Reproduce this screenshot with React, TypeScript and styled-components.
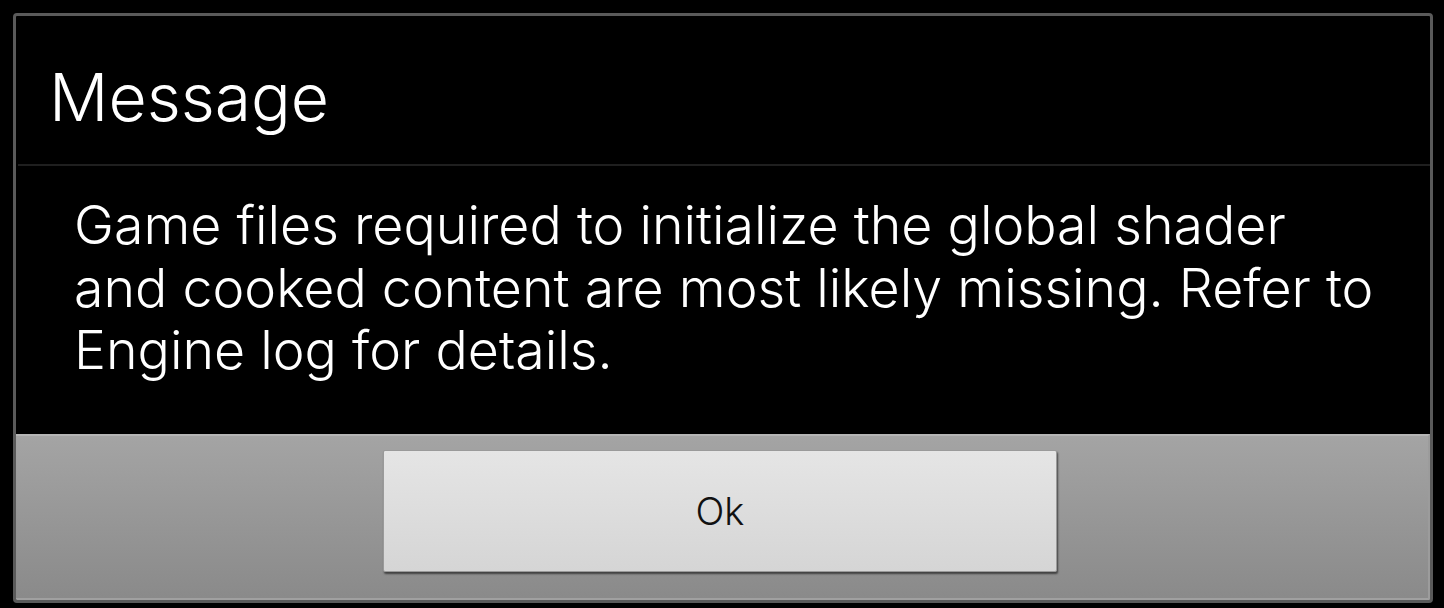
import React from "react";
import styled, { createGlobalStyle } from "styled-components";

const Global = createGlobalStyle`
  html, body { margin: 0; padding: 0; background: #000; }
  body { font-family: Inter, "Noto Sans", sans-serif; }
`;

const Frame = styled.div`
  box-sizing: border-box;
  margin: 13px 0 0 13px;
  width: 1420px;
  height: 590px;
  border: 3px solid #5a5a5a;
  border-radius: 4px;
  background: #000;
  display: flex;
  flex-direction: column;
  overflow: hidden;
`;

const Header = styled.div`
  box-sizing: border-box;
  height: 150px;
  padding: 47px 0 0 31px;
  border-bottom: 2px solid #1f1f1f;
  margin-left: 2px;
`;

const Title = styled.h1`
  margin: 0;
  font-family: Inter, "Noto Sans", sans-serif;
  font-weight: 300;
  font-size: 66px;
  line-height: 68px;
  color: #fff;
`;

const Content = styled.div`
  box-sizing: border-box;
  height: 268px;
  padding: 28px 40px 0 58px;
`;

const MessageText = styled.p`
  margin: 0;
  font-family: Inter, "Noto Sans", sans-serif;
  font-weight: 300;
  font-size: 53.7px;
  line-height: 62.5px;
  color: #fff;
`;

const Footer = styled.div`
  box-sizing: border-box;
  flex: 1;
  border-top: 2px solid #b5b5b5;
  border-bottom: 2px solid #a0a0a0;
  border-right: 2px solid #9c9c9c;
  background: linear-gradient(#a4a4a4, #8a8a8a);
  display: flex;
  justify-content: center;
  padding-top: 14px;
`;

const Button = styled.button`
  box-sizing: border-box;
  width: 674px;
  height: 122px;
  margin-left: -4px;
  border: 1px solid #9a9a9a;
  border-radius: 2px;
  background: linear-gradient(#e5e5e5, #d5d5d5);
  box-shadow: 1px 2px 2px rgba(0, 0, 0, 0.55);
  font-family: Inter, "Noto Sans", sans-serif;
  font-weight: 300;
  font-size: 38px;
  color: #111;
  padding: 0;
  cursor: pointer;
`;

export default function App() {
  return (
    <>
      <Global />
      <Frame>
        <Header>
          <Title>Message</Title>
        </Header>
        <Content>
          <MessageText>
            Game files required to initialize the global shader and cooked content are most likely missing. Refer to Engine log for details.
          </MessageText>
        </Content>
        <Footer>
          <Button>Ok</Button>
        </Footer>
      </Frame>
    </>
  );
}
